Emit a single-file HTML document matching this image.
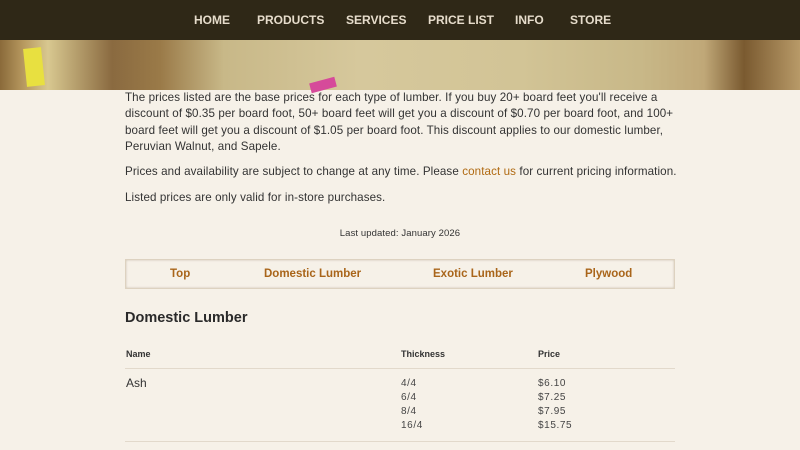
<!DOCTYPE html>
<html><head><style>
body{margin:0;width:800px;height:450px;overflow:hidden;background:#f6f1e8;font-family:"Liberation Sans",sans-serif;color:#333;}
.hdr{position:absolute;left:0;top:0;width:800px;height:90px;background:linear-gradient(90deg,#8a6a3a 0%,#b89a60 3%,#d8c890 6%,#8a6a40 14%,#9a7a48 20%,#c8b888 28%,#d6c89c 45%,#d2c496 65%,#c8b888 80%,#c0a878 88%,#7a5a30 93%,#b89a68 100%);}
.nav{position:absolute;left:0;top:0;width:800px;height:40px;background:#2f2817;}
.nav span{position:absolute;top:13px;color:#e6dccb;font-weight:bold;font-size:12px;}
.tag{position:absolute;left:25px;top:48px;width:18px;height:38px;background:#e8e040;transform:rotate(-6deg);}
.pink{position:absolute;left:310px;top:80px;width:26px;height:10px;background:#d64a9a;transform:rotate(-15deg);}
.c{position:absolute;left:125px;width:560px;font-size:11.6px;line-height:16.3px;white-space:nowrap;letter-spacing:0.1px}
a{color:#b06a12;text-decoration:none}
.tabs{position:absolute;left:125px;top:259px;width:548px;height:28px;border:1px solid #ddd2c0;box-shadow:inset 0 0 2px #cbbfae;}
.tabs span{position:absolute;top:8px;font-weight:bold;font-size:11.5px;color:#a9651a;}
.th{position:absolute;top:349px;font-size:9px;font-weight:bold;color:#333}
.line{position:absolute;left:125px;width:550px;height:1px;background:#e2d9cb}
.v{position:absolute;font-size:10px;line-height:14px;color:#444;letter-spacing:.6px}
</style></head><body>
<div class="hdr"></div><div class="tag"></div><div class="pink"></div>
<div class="nav">
<span style="left:194px">HOME</span><span style="left:257px">PRODUCTS</span><span style="left:346px">SERVICES</span><span style="left:428px">PRICE LIST</span><span style="left:515px">INFO</span><span style="left:570px">STORE</span>
</div>
<div class="c" style="top:90px">The prices listed are the base prices for each type of lumber. If you buy 20+ board feet you'll receive a<br>discount of $0.35 per board foot, 50+ board feet will get you a discount of $0.70 per board foot, and 100+<br>board feet will get you a discount of $1.05 per board foot. This discount applies to our domestic lumber,<br>Peruvian Walnut, and Sapele.</div>
<div class="c" style="top:164px">Prices and availability are subject to change at any time. Please <a>contact us</a> for current pricing information.</div>
<div class="c" style="top:190px">Listed prices are only valid for in-store purchases.</div>
<div class="c" style="top:226px;width:550px;text-align:center;font-size:9.5px">Last updated: January 2026</div>
<div class="tabs"><span style="left:44px">Top</span><span style="left:138px">Domestic Lumber</span><span style="left:307px">Exotic Lumber</span><span style="left:459px">Plywood</span></div>
<div style="position:absolute;left:125px;top:310px;font-size:14.5px;font-weight:bold;color:#2a2a2a">Domestic Lumber</div>
<div class="th" style="left:126px">Name</div><div class="th" style="left:401px">Thickness</div><div class="th" style="left:538px">Price</div>
<div class="line" style="top:368px"></div>
<div style="position:absolute;left:126px;top:376px;font-size:12px;color:#333">Ash</div>
<div class="v" style="left:401px;top:377px">4/4<br>6/4<br>8/4<br>16/4</div>
<div class="v" style="left:538px;top:377px">$6.10<br>$7.25<br>$7.95<br>$15.75</div>
<div class="line" style="top:441px"></div>
</body></html>
